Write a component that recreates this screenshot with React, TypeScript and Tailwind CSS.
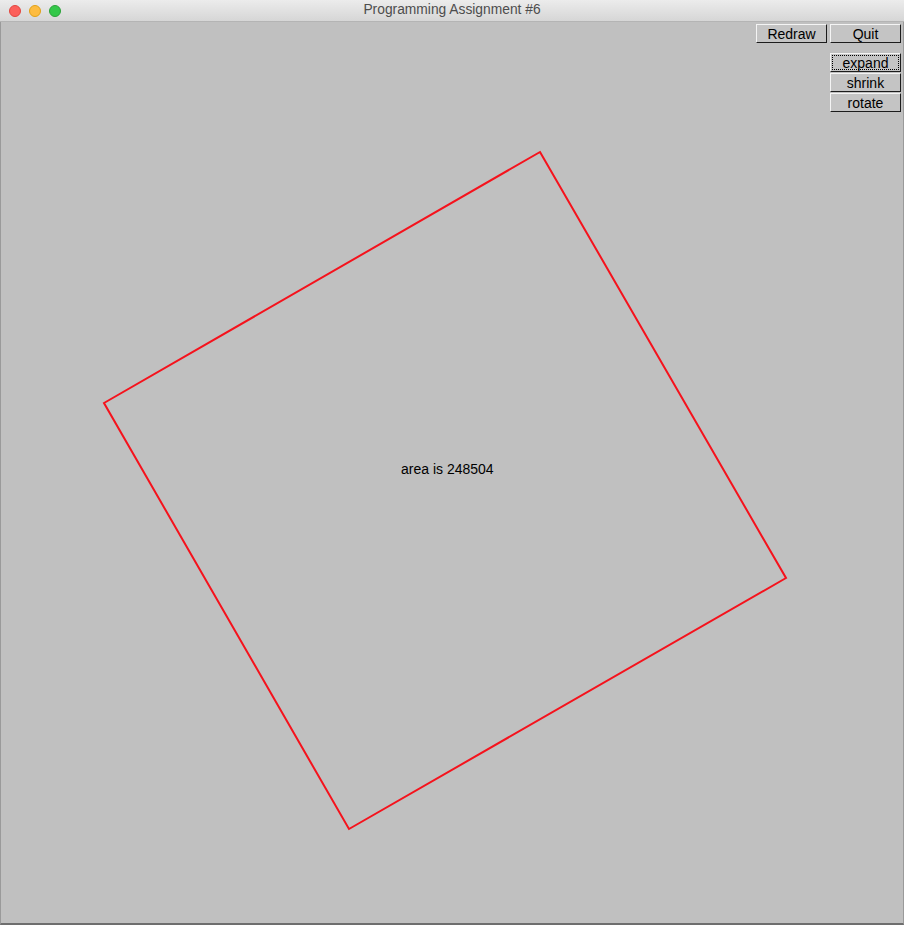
import React from 'react'

const font = { fontFamily: '"Liberation Sans", Arial, sans-serif' }

function XButton({ label, focused, className }: { label: string; focused?: boolean; className: string }) {
  return (
    <button
      className={`flex items-center justify-center border border-t-[#f4f4f4] border-l-[#f4f4f4] border-r-[#1c1c1c] border-b-[#1c1c1c] bg-[#c4c4c4] p-[1px] text-[14px] leading-none text-black ${className}`}
      style={font}
    >
      <span
        className={`flex h-full w-full items-center justify-center border border-dotted ${
          focused ? 'border-black' : 'border-transparent'
        }`}
      >
        {label}
      </span>
    </button>
  )
}

export default function App() {
  return (
    <div className="flex h-[925px] w-[904px] flex-col overflow-hidden bg-[#c0c0c0]" style={font}>
      {/* title bar */}
      <div className="relative flex h-[22px] shrink-0 items-center justify-center border-b border-[#b4b4b4] bg-gradient-to-b from-[#ececec] to-[#d6d6d6]">
        <div className="absolute left-[9px] top-[5px] flex gap-[8px]">
          <span className="h-[12px] w-[12px] rounded-full border border-[#e2463f] bg-[#fc605b]" />
          <span className="h-[12px] w-[12px] rounded-full border border-[#e1a116] bg-[#fdbc40]" />
          <span className="h-[12px] w-[12px] rounded-full border border-[#2ba239] bg-[#34c84a]" />
        </div>
        <span className="text-[13.8px] text-[#4d4d4d]">Programming Assignment #6</span>
      </div>

      {/* canvas */}
      <div className="relative flex-1 border-x border-b-2 border-x-[#9a9a9a] border-b-[#6e6e6e]">
        <svg className="absolute left-[-1px] top-[-22px]" width="904" height="925" viewBox="0 0 904 925">
          <polygon
            points="540,152 786,578 349,829 104,403"
            fill="none"
            stroke="#f5121c"
            strokeWidth="2"
            strokeLinejoin="miter"
          />
        </svg>
        <span className="absolute left-[400px] top-[440px] text-[14px] leading-none text-black">area is 248504</span>

        <div className="absolute right-[2px] top-[2px] flex flex-col items-end gap-[10px]">
          <div className="flex gap-[3px]">
            <XButton label="Redraw" className="h-[19px] w-[71px]" />
            <XButton label="Quit" className="h-[19px] w-[71px]" />
          </div>
          <div className="flex flex-col gap-[1px]">
            <XButton label="expand" focused className="h-[19px] w-[71px]" />
            <XButton label="shrink" className="h-[19px] w-[71px]" />
            <XButton label="rotate" className="h-[19px] w-[71px]" />
          </div>
        </div>
      </div>
    </div>
  )
}
